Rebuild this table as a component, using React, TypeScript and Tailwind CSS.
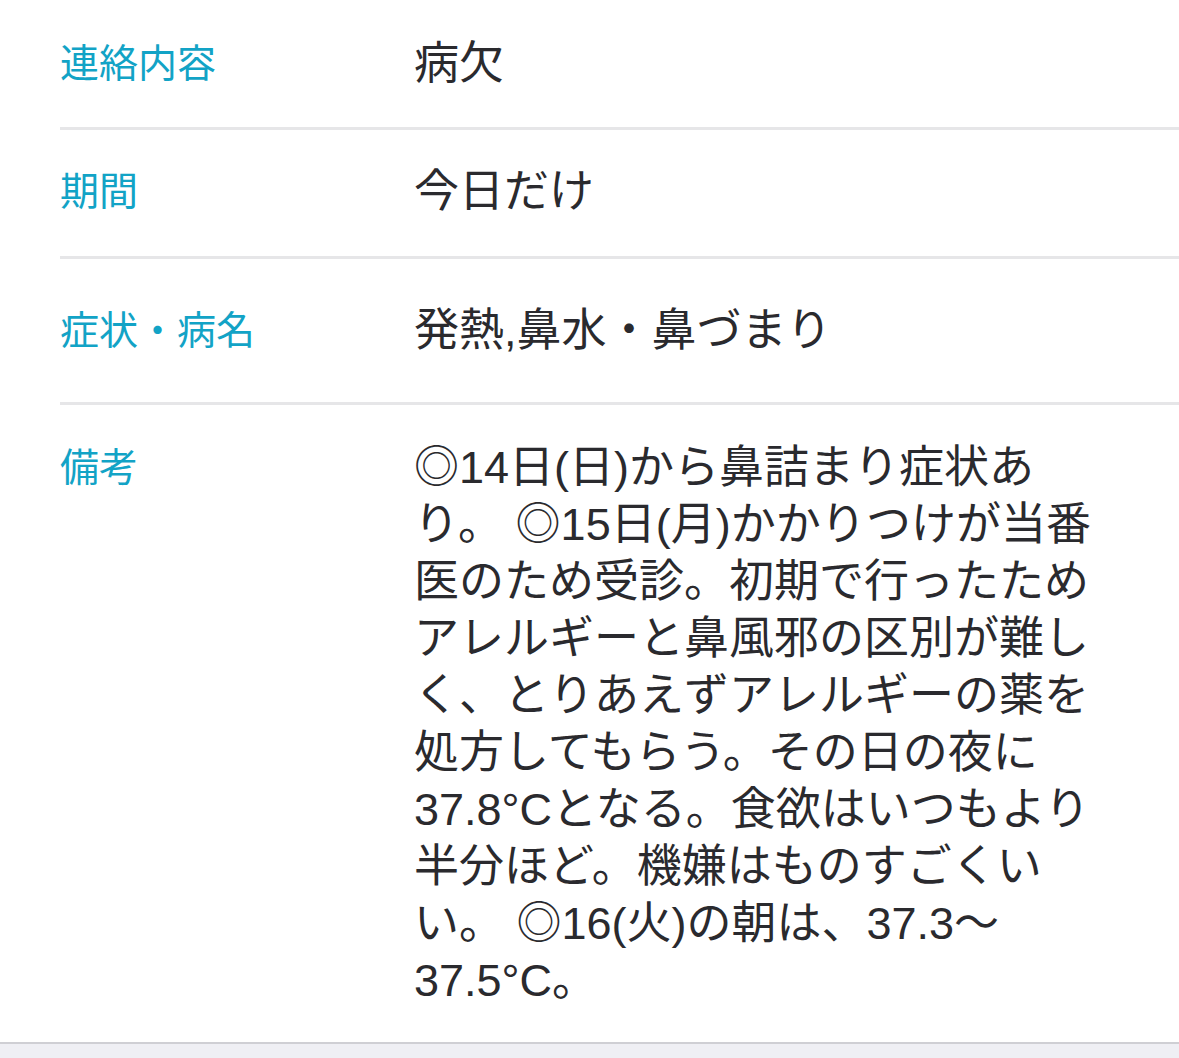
import React from 'react';

const rows = [
  { label: '連絡内容', value: '病欠', pad: 'pt-[35px] pb-[35px]' },
  { label: '期間', value: '今日だけ', pad: 'pt-[33px] pb-[36px]' },
  { label: '症状・病名', value: '発熱,鼻水・鼻づまり', pad: 'pt-[43px] pb-[43px]' },
  {
    label: '備考',
    value:
      '◎14日(日)から鼻詰まり症状あり。 ◎15日(月)かかりつけが当番医のため受診。初期で行ったためアレルギーと鼻風邪の区別が難しく、とりあえずアレルギーの薬を処方してもらう。その日の夜に37.8°Cとなる。食欲はいつもより半分ほど。機嫌はものすごくいい。 ◎16(火)の朝は、37.3〜37.5°C。',
    pad: 'pt-[34px] pb-[33px]',
  },
];

const App: React.FC = () => {
  return (
    <div
      className="w-[1179px] h-[1058px] bg-[#efeff4] overflow-hidden"
      style={{ fontFamily: '"Liberation Sans", "Noto Sans CJK JP", sans-serif' }}
    >
      <div className="bg-white pl-[60px] border-b-[2px] border-[#cfcfd4]">
        {rows.map((row, i) => (
          <div
            key={row.label}
            className={`flex items-start ${row.pad} ${i < rows.length - 1 ? 'border-b-[3px] border-[#e6e6e8]' : ''}`}
          >
            <div className="w-[354px] shrink-0 text-[39px] leading-[57px] text-[#12a3c6]">{row.label}</div>
            <div className="w-[682px] text-[45px] leading-[57px] text-[#2a2a2e]">{row.value}</div>
          </div>
        ))}
      </div>
    </div>
  );
};

export default App;
